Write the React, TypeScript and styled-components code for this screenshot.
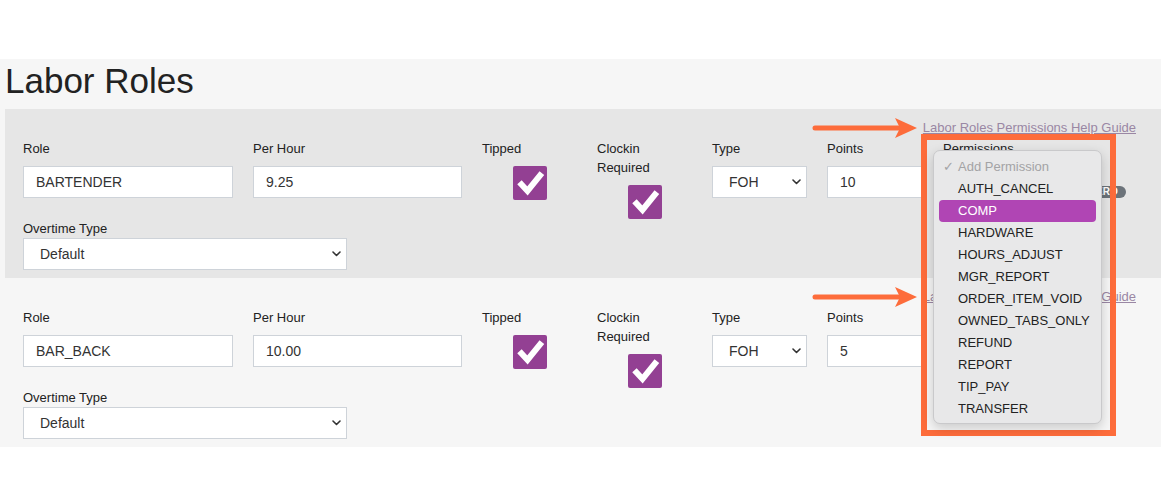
import React from "react";
import styled, { createGlobalStyle } from "styled-components";

const GlobalStyle = createGlobalStyle`
  html, body { margin: 0; padding: 0; background: #ffffff; }
  body { font-family: "Liberation Sans", Arial, Helvetica, sans-serif; color: #222; }
  * { box-sizing: border-box; }
`;

const Screen = styled.div`
  padding-top: 59px;
  width: 1161px;
  overflow: hidden;
`;

const Page = styled.div`
  position: relative;
  background: #f6f6f6;
  padding-left: 5px;
`;

const Title = styled.h1`
  margin: 0 0 6px;
  font-size: 35px;
  line-height: 44px;
  font-weight: 400;
  color: #222;
`;

const Card = styled.div<{ $active?: boolean }>`
  background: ${(p) => (p.$active ? "#e6e6e6" : "transparent")};
  padding: 10px 25px 8px 18px;
`;

const LinkRow = styled.div`
  display: flex;
  justify-content: flex-end;
  height: 20px;
  line-height: 18px;
`;

const HelpLink = styled.a`
  font-size: 13px;
  color: #9a87a4;
  text-decoration: underline;
`;

const FieldsRow = styled.div`
  display: flex;
  gap: 20px;
  align-items: flex-start;
`;

const Field = styled.div<{ $w?: number }>`
  display: flex;
  flex-direction: column;
  ${(p) => (p.$w ? `width: ${p.$w}px; flex: none;` : "flex: 1;")}
`;

const Label = styled.label<{ $tight?: boolean }>`
  font-size: 13px;
  line-height: 19px;
  color: #222;
  margin-bottom: ${(p) => (p.$tight ? "0" : "8px")};
`;

const TextInput = styled.input`
  height: 32px;
  width: 100%;
  border: 1px solid #ced3d9;
  background: #fff;
  padding: 0 12px;
  font-family: inherit;
  font-size: 14px;
  color: #333;
  outline: none;
`;

const SelectWrap = styled.div<{ $w?: number }>`
  position: relative;
  width: ${(p) => (p.$w ? `${p.$w}px` : "100%")};
  flex: none;
`;

const Select = styled.select`
  appearance: none;
  -webkit-appearance: none;
  height: 32px;
  width: 100%;
  border: 1px solid #ced3d9;
  border-radius: 0;
  background: #fff;
  padding: 0 24px 0 16px;
  font-family: inherit;
  font-size: 14px;
  color: #333;
  outline: none;
`;

const Chevron = styled.svg`
  position: absolute;
  right: 6px;
  top: 13px;
  pointer-events: none;
`;

const CheckWrap = styled.div`
  display: flex;
  justify-content: center;
`;

const CheckBox = styled.div`
  width: 34px;
  height: 34px;
  border-radius: 2px;
  background: #934093;
  display: flex;
  align-items: center;
  justify-content: center;
`;

const PermRow = styled.div`
  display: flex;
  align-items: flex-end;
  gap: 8px;
  height: 32px;
`;

const Badge = styled.span`
  display: inline-block;
  background: #6c737a;
  color: #fff;
  font-size: 10px;
  font-weight: 700;
  line-height: 12px;
  height: 12px;
  padding: 0 8px 0 6px;
  border-radius: 6px;
`;

const OvertimeRow = styled.div`
  display: flex;
  flex-direction: column;
  width: 324px;
`;

/* annotation overlays */
const Arrow = styled.svg<{ $top: number }>`
  position: absolute;
  left: 811px;
  top: ${(p) => p.$top}px;
`;

const HighlightBox = styled.div`
  position: absolute;
  left: 921px;
  top: 75px;
  width: 195px;
  height: 302px;
  border: 6px solid #fd6c3b;
  pointer-events: none;
`;

const Menu = styled.div`
  position: absolute;
  left: 933px;
  top: 91px;
  width: 169px;
  height: 274px;
  padding: 5px 5px 4px;
  background: #e8e8e9;
  border: 1px solid #c9c9cb;
  border-radius: 7px;
  box-shadow: 0 4px 12px rgba(0, 0, 0, 0.18);
`;

const MenuItem = styled.div<{ $selected?: boolean; $muted?: boolean }>`
  position: relative;
  height: 22px;
  line-height: 22px;
  padding-left: 19px;
  font-size: 13px;
  border-radius: 4px;
  color: ${(p) => (p.$selected ? "#fff" : p.$muted ? "#a3a3a5" : "#222")};
  background: ${(p) => (p.$selected ? "#b045b4" : "transparent")};
`;

const CheckMark = styled.span`
  position: absolute;
  left: 4px;
  top: 0;
  font-size: 13px;
  color: #a3a3a5;
`;

const ChevronIcon = () => (
  <Chevron width="9" height="6" viewBox="0 0 9 6">
    <path d="M1 1l3.5 3.5L8 1" fill="none" stroke="#333" strokeWidth="1.6" strokeLinecap="round" strokeLinejoin="round" />
  </Chevron>
);

const Tick = () => (
  <svg width="34" height="34" viewBox="0 0 34 34">
    <polyline points="8.5,18.5 14.5,25 27,9.5" fill="none" stroke="#fff" strokeWidth="6" strokeLinecap="square" strokeLinejoin="miter" />
  </svg>
);

const OrangeArrow = ({ top }: { top: number }) => (
  <Arrow $top={top} width="108" height="22" viewBox="0 0 108 22">
    <line x1="4" y1="11" x2="90" y2="11" stroke="#fd6c3b" strokeWidth="5" strokeLinecap="round" />
    <polygon points="84,1 106,11 84,21 89,11" fill="#fd6c3b" />
  </Arrow>
);

type Role = { name: string; rate: string; points: string; active?: boolean; badge?: boolean };

const roles: Role[] = [
  { name: "BARTENDER", rate: "9.25", points: "10", active: true, badge: true },
  { name: "BAR_BACK", rate: "10.00", points: "5" },
];

const permissions = [
  "AUTH_CANCEL",
  "COMP",
  "HARDWARE",
  "HOURS_ADJUST",
  "MGR_REPORT",
  "ORDER_ITEM_VOID",
  "OWNED_TABS_ONLY",
  "REFUND",
  "REPORT",
  "TIP_PAY",
  "TRANSFER",
];

const RoleCard = ({ role }: { role: Role }) => (
  <Card $active={role.active}>
    <LinkRow>
      <HelpLink href="#">Labor Roles Permissions Help Guide</HelpLink>
    </LinkRow>
    <FieldsRow>
      <Field $w={210}>
        <Label>Role</Label>
        <TextInput defaultValue={role.name} />
      </Field>
      <Field $w={209}>
        <Label>Per Hour</Label>
        <TextInput defaultValue={role.rate} />
      </Field>
      <Field $w={95}>
        <Label>Tipped</Label>
        <CheckWrap>
          <CheckBox>
            <Tick />
          </CheckBox>
        </CheckWrap>
      </Field>
      <Field $w={95}>
        <Label>Clockin Required</Label>
        <CheckWrap>
          <CheckBox>
            <Tick />
          </CheckBox>
        </CheckWrap>
      </Field>
      <Field $w={95}>
        <Label>Type</Label>
        <SelectWrap>
          <Select defaultValue="FOH">
            <option>FOH</option>
            <option>BOH</option>
          </Select>
          <ChevronIcon />
        </SelectWrap>
      </Field>
      <Field $w={96}>
        <Label>Points</Label>
        <TextInput defaultValue={role.points} />
      </Field>
      <Field>
        <Label>Permissions</Label>
        <PermRow>
          <SelectWrap $w={133}>
            <Select defaultValue="Add Permission">
              <option>Add Permission</option>
            </Select>
            <ChevronIcon />
          </SelectWrap>
          {role.badge && <Badge>ZERO</Badge>}
        </PermRow>
      </Field>
    </FieldsRow>
    <OvertimeRow>
      <Label $tight>Overtime Type</Label>
      <SelectWrap>
        <Select defaultValue="Default">
          <option>Default</option>
        </Select>
        <ChevronIcon />
      </SelectWrap>
    </OvertimeRow>
  </Card>
);

export default function App() {
  return (
    <>
      <GlobalStyle />
      <Screen>
        <Page>
          <Title>Labor Roles</Title>
          {roles.map((r) => (
            <RoleCard key={r.name} role={r} />
          ))}
          <OrangeArrow top={58} />
          <OrangeArrow top={227} />
          <HighlightBox />
          <Menu>
            <MenuItem $muted>
              <CheckMark>✓</CheckMark>Add Permission
            </MenuItem>
            {permissions.map((p) => (
              <MenuItem key={p} $selected={p === "COMP"}>
                {p}
              </MenuItem>
            ))}
          </Menu>
        </Page>
      </Screen>
    </>
  );
}
